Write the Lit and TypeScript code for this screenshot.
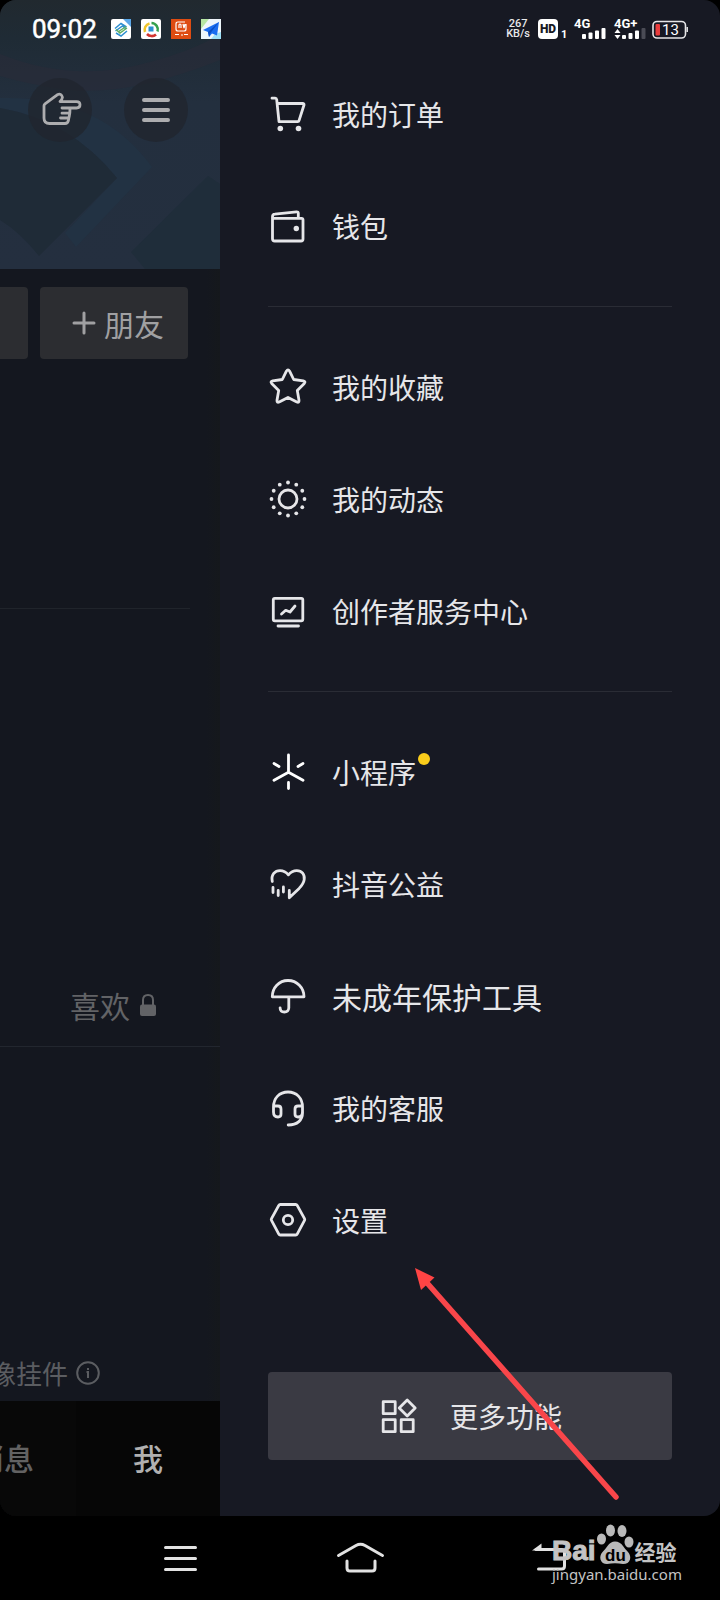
import { LitElement, html, css, svg, nothing, type SVGTemplateResult } from "lit";
import { customElement } from "lit/decorators.js";

interface MenuItem {
  label: string;
  icon: string;
  dot?: boolean;
  large?: boolean;
}

const sunDots = Array.from({ length: 12 }, (_, i) => {
  const a = (i * Math.PI) / 6;
  return svg`<circle cx=${20 + 16.5 * Math.sin(a)} cy=${20 - 16.5 * Math.cos(a)} r="1.9" fill="currentColor" stroke="none"/>`;
});

const icons: Record<string, SVGTemplateResult> = {
  cart: svg`<path d="M4 4.200h3.200q1.300 0 1.500 1.400l2.300 22h18.600q1.200 0 1.500-1.200L36 11q.3-1.500-1.300-1.500H9.200"/>
    <circle cx="12.300" cy="34.500" r="2.800" fill="currentColor" stroke="none"/><circle cx="30.500" cy="34.500" r="2.800" fill="currentColor" stroke="none"/>`,
  wallet: svg`<path d="M5 12.300h28.500q1.500 0 1.500 1.500V33q0 2-2 2H6.800q-2.300 0-2.300-2.300V10.700q0-2.300 2.300-2.500L28.500 5.800q1.800-.2 1.800 1.500v5"/>
    <circle cx="28.300" cy="22.500" r="2.700" fill="currentColor" stroke="none"/>`,
  star: svg`<path d="M18.400 4.200q1.600-2.600 3.200 0l4.100 8.300 9.600 1.400q2.700.6 1 2.500l-7 7 1.700 9.900q.2 2.700-2.200 1.700L20 30.400 11.200 35q-2.400 1-2.200-1.700l1.700-9.900-7-7q-1.700-1.900 1-2.500l9.600-1.400z"/>`,
  sun: svg`<circle cx="20" cy="20" r="9"/>${sunDots}`,
  creator: svg`<rect x="5.300" y="7.300" width="29.500" height="22.500" rx="1.500"/><path d="M10 35h20.500M13.500 23l4.200-3.700 4.300 1.700 5-6"/>`,
  mini: svg`<g stroke="#fff"><path d="M20.500 3v17.500M6 28.300l14.500-8 14.500 8M6 11.500l5 3M35 11.500l-5 3M20.500 30.500v6"/></g>`,
  charity: svg`<path d="M4.300 17.500C2.800 10.500 7 6.600 12 6.600q5 0 8.400 4.200 3.400-4.200 8.400-4.200c5 0 8.200 4 7.400 9-.5 3.800-2.700 6.300-5.100 8.800L21.300 33.700v-7.200M5 23.500v5M10.200 26.500v5M15.400 23v5"/>`,
  umbrella: svg`<path d="M4.300 20.800C4.300 11.600 11 4.500 20 4.500s16 7.100 16 16.300zM20.800 21v11q-.3 4-4.500 4t-4.200-4.200"/>`,
  headset: svg`<path d="M5.500 24V19C5.500 10 11.500 4 20 4s14.500 6 14.500 15v6c0 7-5 12-14.300 12M5.500 19.500q0-1.500 1.500-1.500h3q3 0 3 3v5q0 3-3 3-4.500 0-4.500-5M34.500 19.500q0-1.500-1.500-1.500h-3q-3 0-3 3v5q0 3 3 3 4.500 0 4.500-5"/>`,
  settings: svg`<path d="M12.300 4.500h15.400q1 0 1.500.9l7.300 13.200q.5.9 0 1.800l-7.300 13.700q-.5.900-1.500.9H12.300q-1 0-1.500-.9L3.500 20.400q-.5-.9 0-1.800l7.300-13.200q.5-.9 1.500-.9z"/><circle cx="20" cy="20" r="4.700"/>`,
  more: svg`<rect x="5.200" y="5.700" width="12" height="12"/><rect x="5.200" y="23.700" width="12" height="12"/><rect x="23.200" y="23.700" width="12" height="12"/><path d="M29.200 4l8 8-8 8-8-8z"/>`,
};

const icon = (name: string) =>
  html`<svg class="icon" viewBox="0 0 40 40" aria-hidden="true">${icons[name]}</svg>`;

const groups: MenuItem[][] = [
  [
    { label: "我的订单", icon: "cart" },
    { label: "钱包", icon: "wallet" },
  ],
  [
    { label: "我的收藏", icon: "star" },
    { label: "我的动态", icon: "sun" },
    { label: "创作者服务中心", icon: "creator" },
  ],
  [
    { label: "小程序", icon: "mini", dot: true },
    { label: "抖音公益", icon: "charity" },
    { label: "未成年保护工具", icon: "umbrella", large: true },
    { label: "我的客服", icon: "headset" },
    { label: "设置", icon: "settings" },
  ],
];

@customElement("status-bar")
class StatusBar extends LitElement {
  static styles = css`
    :host {
      display: flex;
      justify-content: space-between;
      align-items: center;
      height: 20px;
      padding: 19px 32px 0;
      color: #fff;
      font-family: Roboto, sans-serif;
    }
    .side { display: flex; align-items: center; }
    .apps { gap: 10px; }
    .time { font-size: 26px; line-height: 20px; font-weight: 400; margin-right: 4px; -webkit-text-stroke: 0.5px #fff; }
    .app { width: 20px; height: 20px; display: block; }
    .speed { font-size: 11px; line-height: 10px; text-align: center; color: #e8e8ea; font-weight: 500; margin-right: 8px; }
    .speed span { display: block; }
    .hd { width: 20px; height: 20px; border-radius: 4px; background: #fff; color: #171923; font-size: 12px; line-height: 20px; font-weight: 900; text-align: center; }
    .sim { align-self: flex-end; font-size: 11px; line-height: 9px; font-weight: 700; width: 13px; padding-left: 3px; }
    .net { width: 32px; height: 20px; margin-right: 8px; font-size: 13px; line-height: 10px; font-weight: 700; white-space: nowrap; }
    .net + .net { margin-right: 6px; }
    .net span { display: block; height: 9px; }
    .net svg { display: block; width: 32px; height: 11px; }
    .battery { width: 36px; height: 20px; display: block; }
    .level { font-size: 15px; fill: #fff; }
  `;

  render() {
    return html`
      <div class="side apps">
        <span class="time">09:02</span>
        <svg class="app" viewBox="0 0 20 20" aria-hidden="true">
          <rect width="20" height="20" rx="2" fill="#fff"/><path d="M12 0h8v8z" fill="#5aa7e8"/>
          <g fill="none" stroke-width="1.500"><path d="M4 9.500l6-5 5.500 3.500M4.500 12l7-5 3.500 3" stroke="#2d8fd0"/><path d="M5 10.500l4 3.500 7-5M7 13l8-5.500" stroke="#5fae62"/><path d="M5 14l5 3 6-5" stroke="#2d8fd0"/></g>
        </svg>
        <svg class="app" viewBox="0 0 20 20" aria-hidden="true">
          <rect width="20" height="20" rx="2" fill="#fff"/>
          <g fill="none" stroke-width="2.600"><path d="M4 13a6.500 6.500 0 0 1 4.500-8.500" stroke="#efc52b"/><path d="M10.500 4a6.500 6.500 0 0 1 6 8.500" stroke="#35a04c"/><path d="M6 15a6.500 6.500 0 0 0 9 .5" stroke="#d2342f"/></g>
          <rect x="7.500" y="7.500" width="5" height="5" fill="#2b8fd0"/>
        </svg>
        <svg class="app" viewBox="0 0 20 20" aria-hidden="true">
          <rect width="20" height="20" fill="#de4c12"/>
          <g fill="none" stroke="#fff" stroke-width="1.200"><path d="M14 3H7Q5 3 5 5v5q0 2 2 2h6q2 0 2-2V5M8 9V6q0-1 1-1t1 1v3M12 5l1 4 1-4"/><path d="M4 15.500h4M10 16h2M13 15.500h4" stroke-width="1"/></g>
        </svg>
        <svg class="app" viewBox="0 0 20 20" aria-hidden="true">
          <rect width="20" height="20" fill="#eef6fb"/><path d="M0 0h8L0 10z" fill="#b6e6a4"/><path d="M10 20l4-5 6-2v7z" fill="#9ee0f7"/>
          <path d="M18 3L2 11l5 2 1 5 3-3.500 5 2z" fill="#1a6df0"/><path d="M18 3L7 13l1 5 1.500-4z" fill="#0b4fc4"/>
        </svg>
      </div>
      <div class="side">
        <div class="speed"><span>267</span><span>KB/s</span></div>
        <div class="hd">HD</div>
        <div class="sim">1</div>
        <div class="net">
          <span>4G</span>
          <svg viewBox="0 0 32 11" fill="#fff" aria-hidden="true"><rect x="8" y="6" width="4" height="5" rx="1"/><rect x="14.500" y="4.500" width="4" height="6.500" rx="1"/><rect x="21" y="2.500" width="4" height="8.500" rx="1"/><rect x="27.500" width="4" height="11" rx="1"/></svg>
        </div>
        <div class="net">
          <span>4G+</span>
          <svg viewBox="0 0 32 11" fill="#fff" aria-hidden="true"><path d="M3.500 1l3 4h-6zM3.500 11l3-4h-6z"/><rect x="8" y="7" width="4" height="4" rx="1"/><rect x="14.500" y="5" width="4" height="6" rx="1"/><rect x="21" y="2.500" width="4" height="8.500" rx="1"/><rect x="27.500" width="4" height="11" rx="1" fill="#4a4b55"/></svg>
        </div>
        <svg class="battery" viewBox="0 0 36 20" role="img" aria-label="13%">
          <rect x="1" y="2.500" width="32.500" height="16.500" rx="4" fill="none" stroke="#e6e6e8" stroke-width="1.600"/>
          <path d="M35.200 8v5" stroke="#e6e6e8" stroke-width="1.500"/>
          <rect x="3.500" y="5" width="4.500" height="11.500" rx="1" fill="#ea3d3d"/>
          <text class="level" x="10" y="16">13</text>
        </svg>
      </div>
    `;
  }
}

@customElement("profile-page")
class ProfilePage extends LitElement {
  static styles = css`
    :host {
      display: flex;
      flex-direction: column;
      min-width: 0;
      overflow: hidden;
      background: linear-gradient(90deg, #14171f calc(100% - 14px), #15181c 100%);
      font-family: "Noto Sans CJK SC", sans-serif;
    }
    button { font: inherit; color: inherit; border: 0; padding: 0; cursor: pointer; }
    .cover { display: grid; height: 269px; background: linear-gradient(#21292f, #1f2b35 14%, #232f3e 38%, #242f3f); }
    .art { grid-area: 1 / 1; width: 100%; height: 269px; display: block; }
    .tools { grid-area: 1 / 1; display: flex; justify-content: flex-end; gap: 32px; padding: 78px 32px 0 0; }
    .round { width: 64px; height: 64px; border-radius: 50%; background: #20252ecc; flex: none; }
    .round svg { display: block; width: 64px; height: 64px; fill: none; stroke: #adadaf; stroke-linecap: round; stroke-linejoin: round; }
    .actions { display: flex; justify-content: flex-end; gap: 12px; padding: 18px 32px 0 0; }
    .action { flex: none; width: 148px; height: 72px; border-radius: 4px; background: #2c2d31; color: #a0a0a2; font-size: 30px; line-height: 40px; display: flex; align-items: center; justify-content: center; gap: 8px; padding-left: 8px; }
    .action svg { width: 24px; height: 24px; stroke: currentColor; stroke-width: 3; stroke-linecap: round; }
    .intro { height: 249px; margin-right: 30px; border-bottom: 1px solid #20242b; }
    .tabs { display: flex; justify-content: flex-end; align-items: center; gap: 10px; height: 74px; margin-top: 359px; padding: 0 64px 4px 0; border-bottom: 1px solid #22262e; color: #626366; font-size: 30px; line-height: 40px; white-space: nowrap; }
    .lock { width: 16px; height: 24px; display: block; }
    .works { flex: 1; display: flex; align-items: flex-end; justify-content: flex-end; padding: 0 120px 10px 0; }
    .hint { display: flex; align-items: center; gap: 8px; color: #5b5d61; font-size: 26px; line-height: 36px; white-space: nowrap; }
    .hint svg { width: 24px; height: 24px; display: block; }
    .bar { display: flex; justify-content: flex-end; height: 115px; background: #060606; }
    .tab { flex: none; width: 144px; padding-bottom: 4px; background: #060606; color: #626262; font-size: 30px; line-height: 40px; font-weight: 500; }
    .tab.dim { background: #080808; }
    .tab.on { color: #b0b0b0; }
  `;

  render() {
    return html`
      <header class="cover">
        <svg class="art" viewBox="0 0 220 269" preserveAspectRatio="none" aria-hidden="true">
          <path d="M0 54Q75 84 150 62Q195 50 220 34V60Q130 96 70 90Q30 85 0 76z" fill="#2a2b38" opacity=".6"/>
          <path d="M0 98Q100 95 152 167L76 247L65 233L117 178Q70 120 0 108z" fill="#223243"/>
          <path d="M0 108Q70 120 117 178L39 256Q20 232 0 220z" fill="#1f2b37"/>
          <path d="M208 176l12 8v85h-75l-14-17z" fill="#1f2d3a"/>
        </svg>
        <div class="tools">
          <button class="round" aria-label="指引">
            <svg viewBox="0 0 64 64" stroke-width="2.800"><path d="M34 30H48.500q3.500 0 3.500-3.200T48.500 23.600H32q2.200-2.100 2.400-4.300-.9-4.400-5.200-2.500L17 25.800q-1 .8-1 2V40q0 5.500 5.500 5.500H37q3 0 3.500-3.500.3-2.300.8-4 .7-3 .7-7.500M41 35.200h-7M40 40h-7.500M37 45.500h-5"/></svg>
          </button>
          <button class="round" aria-label="菜单">
            <svg viewBox="0 0 64 64" stroke-width="4"><path d="M16 22h24M16 32h24M16 42h24" transform="translate(4 0)"/></svg>
          </button>
        </div>
      </header>
      <div class="actions">
        <button class="action" aria-label="编辑资料"></button>
        <button class="action"><svg viewBox="0 0 24 24" aria-hidden="true"><path d="M2 12h20M12 2v20"/></svg>朋友</button>
      </div>
      <div class="intro"></div>
      <div class="tabs">
        <span>喜欢</span>
        <svg class="lock" viewBox="0 0 16 24" aria-hidden="true"><path d="M3 12V7q0-5 5-5t5 5v5" fill="none" stroke="#626366" stroke-width="2"/><rect y="11.500" width="16" height="11.500" rx="2" fill="#626366"/></svg>
      </div>
      <div class="works">
        <div class="hint">头像挂件<svg viewBox="0 0 24 24" fill="none" stroke="currentColor" stroke-width="2" aria-hidden="true"><circle cx="12" cy="12" r="10.800"/><path d="M10.500 11H12v6M12 7v2"/></svg></div>
      </div>
      <nav class="bar">
        <button class="tab dim">消息</button>
        <button class="tab on">我</button>
      </nav>
    `;
  }
}

@customElement("side-drawer")
class SideDrawer extends LitElement {
  static styles = css`
    :host {
      display: block;
      position: relative;
      padding: 58px 48px 56px;
      background: #171923;
      color: #e6e6e9;
      font-family: "Noto Sans CJK SC", sans-serif;
    }
    .group { list-style: none; margin: 0; padding: 0; }
    .group + .group { margin-top: 24px; padding-top: 24px; border-top: 1px solid #2a2c35; }
    .item { display: flex; align-items: center; gap: 24px; height: 112px; color: inherit; text-decoration: none; font-size: 28px; line-height: 40px; }
    .item.large { font-size: 30px; }
    .label { position: relative; }
    .dot { position: absolute; left: 100%; top: 1px; margin-left: 2px; width: 12px; height: 12px; border-radius: 50%; background: #facd1b; }
    .icon { flex: none; width: 40px; height: 40px; fill: none; stroke: currentColor; stroke-width: 2.800; stroke-linecap: round; stroke-linejoin: round; }
    .more { display: flex; align-items: center; justify-content: center; gap: 32px; width: 100%; height: 88px; margin-top: 96px; padding: 0; border: 0; border-radius: 4px; background: #3a3a43; color: inherit; font: inherit; font-size: 28px; line-height: 40px; cursor: pointer; }
    .pointer { position: absolute; right: 98px; bottom: 16px; width: 208px; height: 232px; pointer-events: none; }
  `;

  private item(m: MenuItem) {
    return html`<li>
      <a class="item ${m.large ? "large" : ""}" href="#">
        ${icon(m.icon)}
        <span class="label">${m.label}${m.dot ? html`<i class="dot"></i>` : nothing}</span>
      </a>
    </li>`;
  }

  render() {
    return html`
      ${groups.map((g) => html`<ul class="group">${g.map((m) => this.item(m))}</ul>`)}
      <button class="more">${icon("more")}<span>更多功能</span></button>
      <svg class="pointer" viewBox="0 0 208 232" aria-hidden="true">
        <path d="M14 16L202 229" stroke="#f9464a" stroke-width="5.500" stroke-linecap="round"/>
        <path d="M1 0l19.500 9.500L7 22z" fill="#ff4444"/>
      </svg>
    `;
  }
}

@customElement("system-nav")
class SystemNav extends LitElement {
  static styles = css`
    :host { display: flex; position: relative; justify-content: center; height: 84px; padding: 0 12.5%; background: #000; }
    .key { flex: 1; border: 0; padding: 0; background: none; color: #e2e2e2; cursor: pointer; }
    .key svg { display: block; margin: 0 auto; width: 60px; height: 40px; fill: none; stroke: currentColor; stroke-width: 3; stroke-linecap: round; stroke-linejoin: round; }
    .mark { position: absolute; right: 40px; bottom: 16px; width: 128px; color: #c4c4c4; white-space: nowrap; }
    .brand { display: flex; align-items: flex-end; height: 40px; }
    .latin { font: 700 28px/26px "Liberation Sans", sans-serif; -webkit-text-stroke: 1px #c4c4c4; }
    .han { font: 700 21px/26px "Noto Sans CJK SC", sans-serif; }
    .paw { width: 39px; height: 40px; display: block; flex: none; }
    .du { font: 700 17px "Liberation Sans", sans-serif; fill: #000; }
    .url { font: 400 15px/20px "Noto Sans", sans-serif; display: block; }
  `;

  render() {
    return html`
      <button class="key" aria-label="任务"><svg viewBox="0 0 60 40"><path d="M15.500 9.500h30M15.500 20.500h30M15.500 31.500h30"/></svg></button>
      <button class="key" aria-label="主页"><svg viewBox="0 0 60 40"><path d="M8.500 17.500L26 7.500q4.500-2.500 9 0l17.500 10M17 23v7q0 3 3 3h22q3 0 3-3v-7"/></svg></button>
      <button class="key" aria-label="返回"><svg viewBox="0 0 60 40"><path d="M26 11.500h25.500q3 0 3 3V28q0 3-3 3H28.500"/><path d="M22 12.500l9.500-7v7z" fill="currentColor" stroke="none"/></svg></button>
      <div class="mark">
        <div class="brand">
          <span class="latin">Bai</span>
          <svg class="paw" viewBox="0 0 39 40" fill="#b9b9b9" aria-hidden="true">
            <ellipse cx="5.500" cy="15" rx="4.500" ry="5.500"/><ellipse cx="14.500" cy="6.500" rx="4.500" ry="6"/><ellipse cx="26" cy="7" rx="4.500" ry="6"/><ellipse cx="33" cy="18" rx="4.500" ry="5.500"/>
            <path d="M19 17.500q5 0 8 4.500 2 3 5 6 3 3.500 2 7.500-1.500 4.500-7 4.500-4-.7-8-.7t-8 .7q-5 0-6.500-4.500-1-4 2-7.500 3-3 5-6 3-4.500 7.500-4.500z"/>
            <text class="du" x="9" y="36.500">du</text>
          </svg>
          <span class="han">经验</span>
        </div>
        <span class="url">jingyan.baidu.com</span>
      </div>
    `;
  }
}

@customElement("app-root")
class AppRoot extends LitElement {
  static styles = css`
    :host { display: flex; flex-direction: column; min-height: 100vh; background: #000; }
    .screen { position: relative; flex: 1; display: grid; grid-template-columns: 11fr 25fr; overflow: hidden; border-radius: 16px; }
    .status { position: absolute; inset: 0 0 auto; }
  `;

  render() {
    return html`
      <main class="screen">
        <profile-page></profile-page>
        <side-drawer></side-drawer>
        <status-bar class="status"></status-bar>
      </main>
      <system-nav></system-nav>
    `;
  }
}
